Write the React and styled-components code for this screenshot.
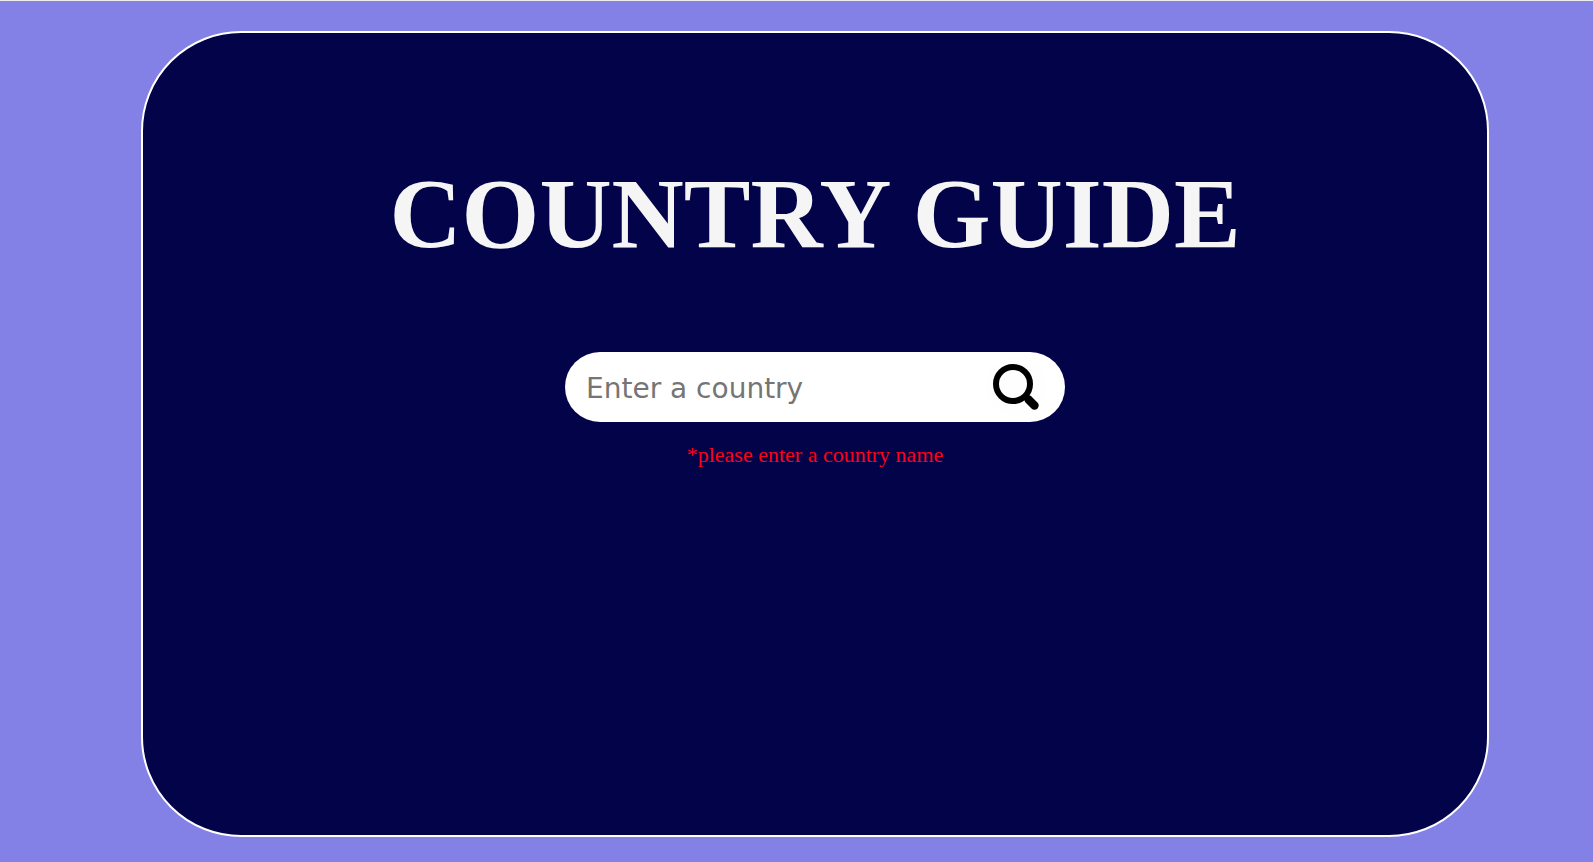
import React, { useState } from "react";
import styled, { createGlobalStyle } from "styled-components";

const GlobalStyle = createGlobalStyle`
  *, *::before, *::after { box-sizing: border-box; }
  body {
    margin: 0;
    background: #8381e6;
    font-family: "Times New Roman", "Liberation Serif", serif;
  }
`;

const Page = styled.main`
  display: flex;
  min-height: 100vh;
  padding: 30px 104px 25px 141px;
  border-top: 1px solid #ececec;
`;

const Card = styled.section`
  flex: 1;
  display: flex;
  flex-direction: column;
  align-items: center;
  padding: 123px 24px 24px;
  border: 2px solid #ffffff;
  border-radius: 100px;
  background: #030349;
`;

const Title = styled.h1`
  margin: 0;
  color: #f5f5f5;
  font-size: 100px;
  font-weight: 700;
  line-height: 115px;
  text-align: center;
`;

const SearchForm = styled.form`
  display: flex;
  align-items: center;
  width: 100%;
  max-width: 500px;
  height: 70px;
  margin-top: 81px;
  padding: 0 19px;
  border-radius: 35px;
  background: #ffffff;
`;

const SearchInput = styled.input`
  flex: 1;
  min-width: 0;
  height: 60px;
  padding: 3px 2px 0;
  border: 0;
  outline: 0;
  background: transparent;
  color: #222222;
  font-family: "Comic Sans MS", "DejaVu Sans", sans-serif;
  font-size: 28px;

  &::placeholder {
    color: #757575;
    opacity: 1;
  }
`;

const SearchButton = styled.button`
  display: flex;
  width: 60px;
  height: 60px;
  padding: 0;
  border: 0;
  border-radius: 50%;
  background: #fefefe;
  cursor: pointer;
`;

const ErrorMessage = styled.p`
  margin: 20px 0 0;
  color: #ff0019;
  font-size: 22px;
  line-height: 25px;
`;

function SearchIcon() {
  return (
    <svg width="60" height="60" viewBox="0 0 60 60" fill="none" stroke="#000000" aria-hidden="true">
      <circle cx="27" cy="27" r="17" strokeWidth="6" />
      <path d="M39 38.5 L42 41.5" strokeWidth="6" />
      <path d="M42.5 42.5 L48.5 48.5" strokeWidth="8.4" strokeLinecap="round" />
    </svg>
  );
}

export default function App() {
  const [country, setCountry] = useState("");

  return (
    <>
      <GlobalStyle />
      <Page>
        <Card>
          <Title>COUNTRY GUIDE</Title>
          <SearchForm role="search" onSubmit={(event) => event.preventDefault()}>
            <SearchInput
              type="text"
              aria-label="Country"
              aria-describedby="country-error"
              placeholder="Enter a country"
              value={country}
              onChange={(event) => setCountry(event.target.value)}
            />
            <SearchButton type="submit" aria-label="Search">
              <SearchIcon />
            </SearchButton>
          </SearchForm>
          {country.trim() === "" && (
            <ErrorMessage id="country-error">*please enter a country name</ErrorMessage>
          )}
        </Card>
      </Page>
    </>
  );
}
